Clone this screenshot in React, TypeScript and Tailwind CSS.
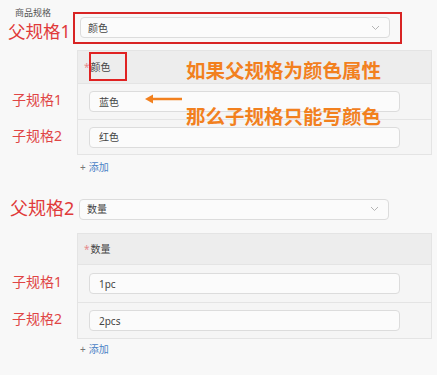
import React from "react"

const font = "font-['Noto_Sans','Noto_Sans_CJK_SC',sans-serif]"

function Chevron() {
  return (
    <svg width="9" height="6" viewBox="0 0 9 6" className="shrink-0">
      <polyline points="1,1 4.5,4.5 8,1" fill="none" stroke="#b5b5b5" strokeWidth="1" />
    </svg>
  )
}

function Select({ value }: { value: string }) {
  return (
    <div className="h-[21px] w-[310px] rounded-[4px] border border-[#dcdcdc] bg-[#fbfbfb] flex items-center justify-between pl-[7px] pr-[9px]">
      <span className="text-[10px] leading-[12px] text-[#444]">{value}</span>
      <Chevron />
    </div>
  )
}

function Input({ value }: { value: string }) {
  return (
    <div className="h-[21px] w-[311px] rounded-[4px] border border-[#dcdcdc] bg-[#fbfbfb] flex items-center pl-[9px]">
      <span className="text-[10px] leading-[12px] text-[#444]">{value}</span>
    </div>
  )
}

function AddLink() {
  return (
    <div className="pl-[80px] flex items-center gap-[3px] text-[10px] leading-[12px] text-[#4a82c6]">
      <span className="text-[#777]">+</span>
      <span>添加</span>
    </div>
  )
}

interface Row {
  label: string
  value: string
  h: string
}

function Panel({
  title,
  headerH,
  rows,
  children,
}: {
  title: string
  headerH: string
  rows: Row[]
  children?: React.ReactNode
}) {
  return (
    <div className="flex">
      <div className="w-[77px] flex flex-col">
        <div className={headerH} />
        {rows.map((r) => (
          <div key={r.label} className={`${r.h} flex items-center pl-[12px]`}>
            <span className="text-[14px] leading-[16px] text-[#e04545]">{r.label}</span>
          </div>
        ))}
      </div>
      <div className="relative w-[355px] border border-[#e4e4e4] bg-[#f5f5f5]">
        <div className={`${headerH} bg-[#ededed] flex items-center pl-[6px] text-[10px] leading-[12px] text-[#444]`}>
          <span className="text-[#e58a8a] mr-[1px]">*</span>
          <span>{title}</span>
        </div>
        {rows.map((r) => (
          <div key={r.label} className={`${r.h} border-t border-[#e4e4e4] flex items-center pl-[11px]`}>
            <Input value={r.value} />
          </div>
        ))}
        {children}
      </div>
    </div>
  )
}

export default function App() {
  return (
    <div className={`w-[437px] h-[375px] overflow-hidden bg-[#f8f8f8] ${font}`}>
      {/* 父规格1 */}
      <div className="flex pt-[8px]">
        <div className="w-[73px] flex flex-col">
          <span className="pl-[15px] text-[9px] leading-[10px] text-[#555]">商品规格</span>
          <span className="pl-[8px] mt-[3px] text-[17.5px] leading-[21px] text-[#e03a3a]">父规格1</span>
        </div>
        <div className="mt-[4px] w-[329px] h-[32px] border-2 border-[#d82424] pl-[5px] pt-[3px]">
          <Select value="颜色" />
        </div>
      </div>

      <div className="mt-[6px]">
        <Panel
          title="颜色"
          headerH="h-[32px]"
          rows={[
            { label: "子规格1", value: "蓝色", h: "h-[36px]" },
            { label: "子规格2", value: "红色", h: "h-[35px]" },
          ]}
        >
          <div className="absolute left-[11px] top-[1px] w-[38px] h-[29px] border-2 border-[#e02222]" />
          <span className="absolute left-[108px] top-[10px] text-[19.5px] leading-[20px] font-bold text-[#f2801e] whitespace-nowrap">
            如果父规格为颜色属性
          </span>
          <span className="absolute left-[108px] top-[56px] text-[19.5px] leading-[20px] font-bold text-[#f2801e] whitespace-nowrap">
            那么子规格只能写颜色
          </span>
          <svg className="absolute left-[67px] top-[42px]" width="38" height="12" viewBox="0 0 38 12">
            <line x1="6" y1="6" x2="37" y2="6" stroke="#f2801e" strokeWidth="2.5" />
            <polygon points="0,6 8,1.5 8,10.5" fill="#f2801e" />
          </svg>
        </Panel>
      </div>

      <div className="mt-[6px]">
        <AddLink />
      </div>

      {/* 父规格2 */}
      <div className="flex items-center mt-[24px]">
        <div className="w-[79px] pl-[10px]">
          <span className="text-[18px] leading-[22px] text-[#e03a3a]">父规格2</span>
        </div>
        <Select value="数量" />
      </div>

      <div className="mt-[12px]">
        <Panel
          title="数量"
          headerH="h-[30px]"
          rows={[
            { label: "子规格1", value: "1pc", h: "h-[38px]" },
            { label: "子规格2", value: "2pcs", h: "h-[36px]" },
          ]}
        />
      </div>

      <div className="mt-[4px]">
        <AddLink />
      </div>
    </div>
  )
}
